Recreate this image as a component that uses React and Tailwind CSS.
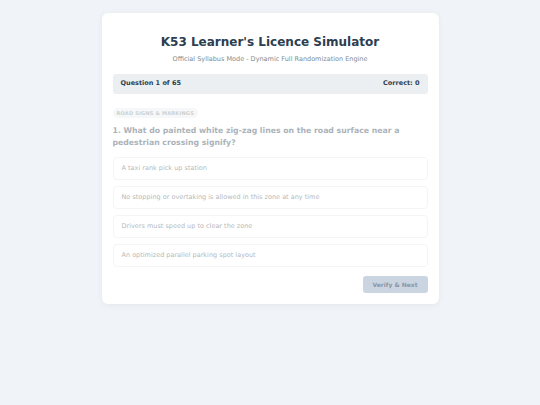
import React from "react";

const options = [
  "A taxi rank pick up station",
  "No stopping or overtaking is allowed in this zone at any time",
  "Drivers must speed up to clear the zone",
  "An optimized parallel parking spot layout",
];

export default function App() {
  return (
    <div className="min-h-[405px] w-[540px] bg-[#f0f4f8] pt-[13px]" style={{ fontFamily: '"DejaVu Sans", Verdana, sans-serif' }}>
      <div className="mx-auto w-[337px] rounded-[6px] bg-white px-[11px] pt-[21px] pb-[11px] shadow-[0_1px_6px_rgba(0,0,0,0.06)]">
        <h1 className="text-center text-[12px] font-bold leading-[16px] text-[#2c3e50]">K53 Learner's Licence Simulator</h1>
        <p className="mt-[4px] text-center text-[6.5px] leading-[10px] text-[#7f8c8d]">Official Syllabus Mode - Dynamic Full Randomization Engine</p>
        <div className="mt-[10px] flex h-[20px] items-center justify-between rounded-[3px] bg-[#eceff1] px-[8px] text-[6.5px] font-bold text-[#2c3e50]">
          <span>Question 1 of 65</span>
          <span>Correct: 0</span>
        </div>
        <div className="opacity-40">
          <div className="mt-[14px] inline-block rounded-full bg-[#e8ecef] px-[4px] py-[1px] text-[5px] font-bold uppercase leading-[8px] tracking-[0.2px] text-[#7f8c8d]">Road Signs &amp; Markings</div>
          <p className="mt-[3px] text-[7.75px] font-bold leading-[12px] text-[#2c3e50]">1. What do painted white zig-zag lines on the road surface near a pedestrian crossing signify?</p>
          <div className="mt-[8px] flex flex-col gap-[6px]">
            {options.map((o) => (
              <div key={o} className="flex h-[23px] items-center rounded-[4px] border border-[#e3e7ea] px-[8px] text-[6.5px] text-[#4a4a4a]">{o}</div>
            ))}
          </div>
        </div>
        <div className="mt-[9px] flex justify-end">
          <button className="h-[17px] w-[65px] rounded-[3px] bg-[#cbd5e1] text-[6px] font-bold text-[#8a96a6]">Verify &amp; Next</button>
        </div>
      </div>
    </div>
  );
}
